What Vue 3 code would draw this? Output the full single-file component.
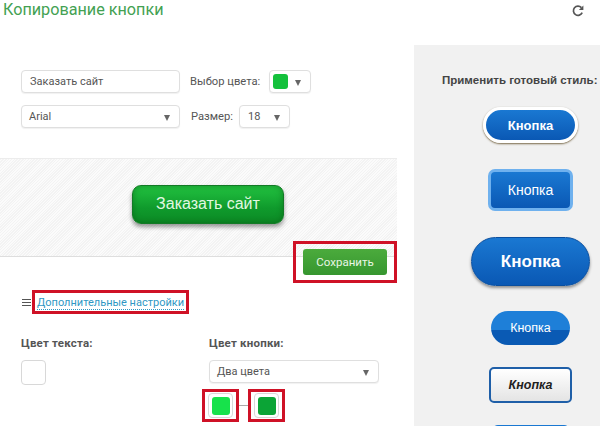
<script setup>
const styleButtons = [
  { id: 1, cls: 'pill-white', text: 'Кнопка' },
  { id: 2, cls: 'square-glow', text: 'Кнопка' },
  { id: 3, cls: 'big-pill', text: 'Кнопка' },
  { id: 4, cls: 'half-tone', text: 'Кнопка' },
  { id: 5, cls: 'outline', text: 'Кнопка' },
  // only the top edge of this one is on screen
  { id: 6, cls: 'last', text: '' },
]
</script>

<template>
  <div class="page">
    <header class="top">
      <h1>Копирование кнопки</h1>
      <svg class="refresh" width="14" height="14" viewBox="0 0 14 14">
        <path d="M11.2 8.6A4.6 4.6 0 1 1 10.4 3.6" fill="none" stroke="#555" stroke-width="1.7" />
        <path d="M12.4 1.4V6H7.9Z" fill="#555" />
      </svg>
    </header>

    <div class="body">
      <main class="editor">
        <div class="fields">
          <div class="row">
            <div class="control wide">Заказать сайт</div>
            <span class="label color-label">Выбор цвета:</span>
            <div class="control picker">
              <span class="picker-chip"></span>
              <span class="arrow"></span>
            </div>
          </div>
          <div class="row">
            <div class="control wide font-select">Arial <span class="arrow"></span></div>
            <span class="label size-label">Размер:</span>
            <div class="control size-select">18 <span class="arrow"></span></div>
          </div>
        </div>

        <section class="preview">
          <button class="order">Заказать сайт</button>
        </section>

        <div class="save-wrap">
          <div class="red save-frame">
            <button class="save">Сохранить</button>
          </div>
        </div>

        <div class="more">
          <span class="burger"><i></i><i></i><i></i></span>
          <div class="red link-frame"><a class="more-link">Дополнительные настройки</a></div>
        </div>

        <div class="colors">
          <div class="text-color">
            <div class="heading">Цвет текста:</div>
            <div class="white-chip"></div>
          </div>
          <div class="button-color">
            <div class="heading">Цвет кнопки:</div>
            <div class="control two-select">Два цвета <span class="arrow"></span></div>
            <div class="pair">
              <div class="red chip-frame"><span class="chip-box"><span class="chip light"></span></span></div>
              <span class="dash"></span>
              <div class="red chip-frame"><span class="chip-box"><span class="chip dark"></span></span></div>
            </div>
          </div>
        </div>
      </main>

      <aside class="side">
        <h2>Применить готовый стиль:</h2>
        <div class="side-list">
          <button v-for="b in styleButtons" :key="b.id" class="style-btn" :class="b.cls">{{ b.text }}</button>
        </div>
      </aside>
    </div>
  </div>
</template>

<style scoped>
.page {
  width: 600px;
  height: 426px;
  overflow: hidden;
  background: #fff;
  font-family: Roboto, "Liberation Sans", sans-serif;
  color: #444;
}

.top {
  height: 45px;
  display: flex;
  justify-content: space-between;
  padding: 0 15px 0 3px;
  box-sizing: border-box;
}

h1 {
  margin: 0;
  font-size: 16.2px;
  line-height: 20px;
  font-weight: 400;
  color: #43a152;
}

.refresh {
  margin-top: 4px;
}

.body {
  display: flex;
  height: 381px;
}

.editor {
  width: 414px;
  flex: none;
}

.fields {
  padding: 25px 0 0 21px;
  display: flex;
  flex-direction: column;
  gap: 12px;
}

.row {
  display: flex;
  align-items: center;
}

.control {
  box-sizing: border-box;
  height: 23px;
  border: 1px solid #dfdfdf;
  border-radius: 4px;
  background: #fff;
  font-size: 11px;
  line-height: 21px;
  color: #555;
  box-shadow: 0 1px 1px rgba(0, 0, 0, 0.06);
  position: relative;
}

.wide {
  width: 159px;
  padding-left: 8px;
}

.font-select {
  padding-left: 7px;
}

.arrow {
  position: absolute;
  right: 9px;
  top: 9px;
  border-left: 3.5px solid transparent;
  border-right: 3.5px solid transparent;
  border-top: 6px solid #666;
}

.label {
  font-size: 11.2px;
  color: #555;
}

.color-label {
  margin-left: 10px;
  width: 79px;
}

.size-label {
  margin-left: 11px;
  width: 48px;
}

.picker {
  width: 42px;
}

.picker-chip {
  position: absolute;
  left: 3px;
  top: 3px;
  width: 15px;
  height: 15px;
  border-radius: 3px;
  background: #14c13c;
}

.size-select {
  width: 51px;
  padding-left: 8px;
}

.preview {
  margin-top: 30px;
  height: 99px;
  width: 397px;
  box-sizing: border-box;
  border-top: 1px solid #ececec;
  border-bottom: 1px solid #dedede;
  background: repeating-linear-gradient(135deg, #f3f3f3 0 1px, #fbfbfb 1px 2px);
  padding: 26px 0 0 132px;
}

.order {
  display: block;
  width: 152px;
  height: 39px;
  border: 1px solid #137a26;
  border-radius: 9px;
  background: linear-gradient(#22c240, #0f9a2c 60%, #0c8a25);
  box-shadow: 0 3px 4px rgba(0, 0, 0, 0.4), inset 0 0 6px rgba(0, 70, 10, 0.4);
  color: #e2f8e2;
  font-family: "Liberation Sans", Arial, sans-serif;
  font-size: 16px;
  padding: 0 0 2px;
}

.red {
  box-sizing: border-box;
  border: 3px solid #cf1126;
}

.save-wrap {
  display: flex;
  justify-content: flex-end;
  width: 397px;
  margin-top: -16px;
}

.save-frame {
  width: 104px;
  height: 42px;
  padding: 5px 0 0 7px;
}

.save {
  display: block;
  width: 84px;
  height: 26px;
  border: 0;
  border-radius: 3px;
  background: linear-gradient(#4bab3c, #36962f);
  color: #e9f6e6;
  font-family: Roboto, sans-serif;
  font-size: 11.5px;
  padding: 0;
}

.more {
  display: flex;
  align-items: center;
  margin: 7px 0 0 22px;
}

.burger {
  width: 10px;
  display: flex;
  flex-direction: column;
  gap: 2px;
}

.burger i {
  display: block;
  width: 9px;
  height: 1px;
  background: #555;
}

.link-frame {
  width: 157px;
  height: 24px;
  padding-left: 2px;
  line-height: 16px;
}

.more-link {
  font-size: 11px;
  color: #2f97c4;
  border-bottom: 1px dotted #2f97c4;
  white-space: nowrap;
}

.colors {
  display: flex;
  margin-top: 22px;
  padding-left: 21px;
}

.text-color {
  width: 188px;
}

.heading {
  font-size: 11.5px;
  line-height: 14px;
  font-weight: 700;
  color: #555;
  letter-spacing: 0.2px;
}

.white-chip {
  width: 25px;
  height: 25px;
  margin-top: 10px;
  box-sizing: border-box;
  border: 1px solid #d8d8d8;
  border-radius: 4px;
  background: #fff;
}

.two-select {
  width: 170px;
  margin-top: 10px;
  padding-left: 7px;
}

.pair {
  display: flex;
  align-items: center;
  margin: 6px 0 0 -7px;
}

.chip-frame {
  width: 37px;
  height: 33px;
  display: flex;
  align-items: center;
  justify-content: center;
}

.chip-box {
  box-sizing: border-box;
  width: 25px;
  height: 25px;
  border: 1px solid #d8d8d8;
  border-radius: 4px;
  display: flex;
  align-items: center;
  justify-content: center;
}

.chip {
  width: 18px;
  height: 18px;
  border-radius: 3px;
}

.light {
  background: #17e24b;
}

.dark {
  background: #0ba436;
}

.dash {
  width: 9px;
  height: 1px;
  background: #aaa;
}

.side {
  flex: 1;
  background: #f1f1f1;
}

h2 {
  margin: 28px 0 0 28px;
  font-size: 11.5px;
  line-height: 14px;
  font-weight: 700;
  color: #444;
  white-space: nowrap;
  font-family: "Liberation Sans", Arial, sans-serif;
}

.side-list {
  display: flex;
  flex-direction: column;
  align-items: center;
  margin-top: 20px;
  padding-left: 47px;
}

.style-btn {
  flex: none;
  box-sizing: border-box;
  padding: 0;
  color: #fff;
  font-family: "Liberation Sans", Arial, sans-serif;
  background: linear-gradient(#1a78d2, #0a58b4);
}

.pill-white {
  width: 95px;
  height: 36px;
  border: 3px solid #fff;
  border-radius: 18px;
  box-shadow: 0 1px 2px rgba(90, 70, 30, 0.8);
  font-size: 13px;
  font-weight: 700;
}

.square-glow {
  width: 85px;
  height: 42px;
  margin-top: 26px;
  border: 3px solid #6fb1ee;
  border-radius: 7px;
  font-size: 14px;
}

.big-pill {
  width: 119px;
  height: 49px;
  margin-top: 26px;
  border: 1px solid #0a4f9f;
  border-radius: 25px;
  box-shadow: 0 2px 3px rgba(0, 0, 0, 0.4);
  font-size: 17px;
  font-weight: 700;
}

.half-tone {
  width: 79px;
  height: 34px;
  margin-top: 25px;
  border: 0;
  border-radius: 17px;
  background: linear-gradient(#1e7fd8 0 55%, #0a5ab4 55%);
  font-size: 12.5px;
}

.outline {
  width: 83px;
  height: 36px;
  margin-top: 22px;
  border: 2px solid #1f5fa8;
  border-radius: 5px;
  background: linear-gradient(#fff, #e4e4e4);
  color: #222;
  font-size: 12.5px;
  font-weight: 700;
  font-style: italic;
}

.last {
  width: 78px;
  height: 30px;
  margin-top: 22px;
  border: 0;
  border-radius: 6px;
}
</style>
